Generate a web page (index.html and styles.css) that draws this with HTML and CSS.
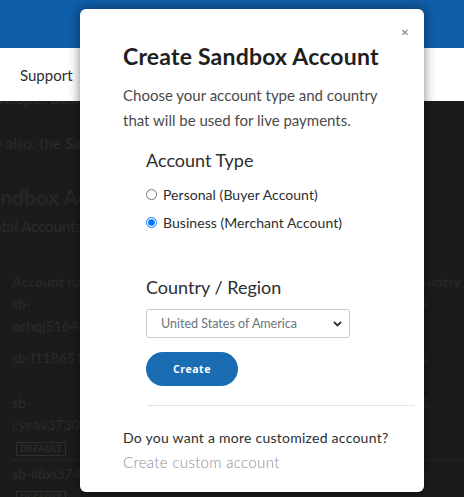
FILE: index.html
```html
<!DOCTYPE html>
<html lang="en">
<head>
<meta charset="utf-8">
<title>Create Sandbox Account</title>
<link rel="stylesheet" href="styles.css">
</head>
<body>
<header class="topbar"></header>
<nav class="nav"><span class="nav-link">Support</span></nav>
<main class="page">
  <p class="para cut-top">Developer Dashboard lets you manage test accounts</p>
  <p class="para">See also: the <b>Sandbox testing guide</b></p>
  <h2 class="page-title">Sandbox Accounts</h2>
  <p class="para total">Total Accounts: 4</p>
  <div class="table">
    <div class="row head"><span class="col-name">Account name</span><span class="col-country">Country</span></div>
    <div class="row r1"><span class="col-name">sb-<br>qchqj5164@personal.example.com</span><span class="col-country">US</span></div>
    <div class="row r2"><span class="col-name">sb-l118651@business.example.com</span><span class="col-country">US</span></div>
    <div class="row r3"><span class="col-name">sb-<br>cyeav3730@personal.example.com<br><span class="badge">DEFAULT</span></span><span class="col-country">US</span></div>
    <div class="row r4"><span class="col-name">sb-ii8xi374@business.example.com<br><span class="badge">DEFAULT</span></span><span class="col-country">US</span></div>
  </div>
</main>

<div class="modal" role="dialog">
  <button class="close" aria-label="Close">&#x2715;</button>
  <h1 class="modal-title">Create Sandbox Account</h1>
  <p class="modal-sub">Choose your account type and country that will be used for live payments.</p>
  <div class="section">
    <h3 class="section-title">Account Type</h3>
    <label class="radio"><input type="radio" name="type"> Personal (Buyer Account)</label>
    <label class="radio"><input type="radio" name="type" checked> Business (Merchant Account)</label>
    <h3 class="section-title country">Country / Region</h3>
    <div class="select">
      <span class="select-value">United States of America</span>
      <svg class="chev" width="9" height="6" viewBox="0 0 9 6"><path d="M1 1 L4.5 4.5 L8 1" fill="none" stroke="#333" stroke-width="1.8"/></svg>
    </div>
    <button class="create">Create</button>
    <div class="divider"></div>
  </div>
  <p class="more">Do you want a more customized account?</p>
  <p class="custom">Create custom account</p>
</div>
</body>
</html>
```
FILE: styles.css
```css
html, body {
  margin: 0;
  padding: 0;
}
body {
  width: 464px;
  height: 497px;
  overflow: hidden;
  background: #1b1b1b;
  font-family: "Lato", "Noto Sans", sans-serif;
  position: relative;
}
.topbar {
  height: 48px;
  background: #0f5ea9;
}
.nav {
  position: relative;
  z-index: 1;
  height: 53px;
  background: #ffffff;
  display: flex;
  align-items: center;
  padding-left: 20px;
}
.nav-link {
  font-size: 15px;
  color: #2c2e2f;
}
.page {
  margin-left: -22px;
  height: 396px;
  overflow: hidden;
  color: #2b2b2b;
  font-size: 15px;
}
.para {
  margin: 0;
  line-height: 22px;
}
.cut-top {
  margin-top: -14px;
}
.para + .para, .cut-top + .para {
  margin-top: 23px;
}
.page-title {
  margin: 30px 0 0;
  font-size: 21px;
  font-weight: 900;
  line-height: 26px;
  color: #262626;
}
.page-title + .total {
  margin-top: 5px;
  margin-left: 8px;
}
.table {
  margin-top: 34px;
  padding-left: 34px;
  font-size: 14px;
  line-height: 22px;
}
.row {
  display: grid;
  grid-template-columns: 398px 1fr;
}
.col-name {
  overflow: hidden;
  white-space: nowrap;
}
.head {
  font-weight: 900;
  color: #262626;
}
.r1 { margin-top: 0; }
.r2 { margin-top: 10px; }
.r3 { margin-top: 23px; }
.r4 {
  margin-top: 2px;
  padding-top: 2px;
  border-top: 1px dotted #2e2e2e;
}
.badge {
  display: inline-block;
  margin: -1px 0 0 4px;
  border: 1px solid #2e2e2e;
  font-size: 9px;
  font-weight: 900;
  line-height: 12px;
  padding: 0 3px;
  letter-spacing: 0.5px;
}

.modal {
  position: absolute;
  z-index: 2;
  left: 80px;
  top: 9px;
  width: 344px;
  height: 483px;
  box-sizing: border-box;
  background: #ffffff;
  border-radius: 6px;
  padding: 33px 10px 0 43px;
  box-shadow: 0 0 12px rgba(0, 0, 0, 0.5);
  color: #2c2e2f;
}
.close {
  position: absolute;
  top: 18px;
  right: 13px;
  width: 12px;
  height: 12px;
  padding: 0;
  border: 0;
  background: none;
  font-size: 10px;
  line-height: 12px;
  color: #7a7a7a;
  font-family: "DejaVu Sans", sans-serif;
}
.modal-title {
  margin: 0;
  font-size: 23px;
  font-weight: 700;
  letter-spacing: 0.2px;
  line-height: 28px;
  color: #1f1f1f;
}
.modal-sub {
  margin: 13px 0 0;
  font-size: 15px;
  line-height: 25px;
  color: #4a4a4a;
  width: 260px;
}
.section {
  padding-left: 23px;
}
.section-title {
  margin: 15px 0 0;
  font-size: 18px;
  font-weight: 400;
  line-height: 24px;
  color: #2c2e2f;
}
.section-title.country {
  margin-top: 39px;
}
.radio {
  display: flex;
  align-items: center;
  gap: 6px;
  height: 28px;
  font-size: 14px;
  color: #2c2e2f;
  letter-spacing: 0.05px;
}
.radio:first-of-type {
  margin-top: 8px;
}
.radio input {
  margin: 0;
  width: 11px;
  height: 11px;
}
.select {
  margin-top: 10px;
  width: 204px;
  height: 29px;
  box-sizing: border-box;
  border: 1px solid #c9cccf;
  border-radius: 3px;
  display: flex;
  align-items: center;
  justify-content: space-between;
  padding: 0 7px 0 14px;
}
.select-value {
  font-size: 12.5px;
  color: #6c7378;
}
.create {
  display: block;
  margin-top: 14px;
  width: 92px;
  height: 34px;
  border: 0;
  border-radius: 17px;
  background: #1a6cb3;
  color: #ffffff;
  font-family: "Open Sans", sans-serif;
  font-weight: 700;
  font-size: 10.5px;
  letter-spacing: 0.5px;
  padding: 0;
}
.divider {
  margin-top: 19px;
  border-top: 1px dotted #c9c9c9;
  margin-left: 2px;
}
.more {
  margin: 20px 0 0;
  font-size: 14px;
  line-height: 24px;
  letter-spacing: 0.25px;
  color: #2c2e2f;
}
.custom {
  margin: 0;
  font-size: 15px;
  font-weight: 300;
  line-height: 24px;
  letter-spacing: 0.35px;
  color: #8f8f8f;
}
```
